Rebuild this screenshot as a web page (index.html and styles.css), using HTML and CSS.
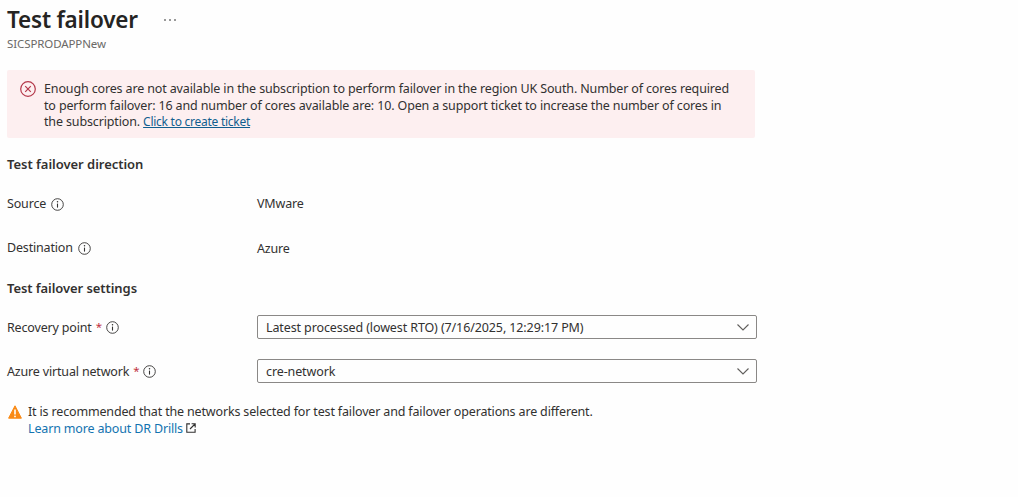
FILE: index.html
```html
<!DOCTYPE html>
<html lang="en">
<head>
  <meta charset="UTF-8">
  <title>Test failover</title>
  <link rel="stylesheet" href="styles.css">
</head>
<body>

<svg class="sprite" width="0" height="0">
  <symbol id="icon-info" viewBox="0 0 13 13">
    <circle cx="6.5" cy="6.5" r="5.8" fill="none" stroke="currentColor" stroke-width=".9"/>
    <path d="M6.5 5.6v4" stroke="currentColor" stroke-width="1.1"/>
    <circle cx="6.5" cy="3.7" r=".75" fill="currentColor"/>
  </symbol>
  <symbol id="icon-chevron" viewBox="0 0 12 7">
    <path d="M.5.5 6 6 11.5.5" fill="none" stroke="currentColor" stroke-width="1.1"/>
  </symbol>
</svg>

<div id="header">
  <h1>Test failover</h1>
  <div class="more"><i></i><i></i><i></i></div>
</div>
<div id="subtitle">SICSPRODAPPNew</div>

<div id="error-box">
  <svg class="error-icon" viewBox="0 0 16 16">
    <circle cx="8" cy="8" r="7.3" fill="none" stroke="currentColor" stroke-width="1.2"/>
    <path d="M5.2 5.2l5.6 5.6M10.8 5.2l-5.6 5.6" stroke="currentColor" stroke-width="1.2"/>
  </svg>
  <div class="error-text">
    Enough cores are not available in the subscription to perform failover in the region UK South. Number of cores required<br>
    to perform failover: 16 and number of cores available are: 10. Open a support ticket to increase the number of cores in<br>
    the subscription. <a href="#">Click to create ticket</a>
  </div>
</div>

<h2>Test failover direction</h2>
<div class="row">
  <div class="label"><span>Source</span><svg class="info"><use href="#icon-info"/></svg></div>
  <div class="value">VMware</div>
</div>
<div class="row">
  <div class="label"><span>Destination</span><svg class="info"><use href="#icon-info"/></svg></div>
  <div class="value lower">Azure</div>
</div>

<h2 class="settings">Test failover settings</h2>
<div class="row">
  <div class="label"><span>Recovery point</span><b class="req">*</b><svg class="info"><use href="#icon-info"/></svg></div>
  <div class="select" tabindex="0"><span>Latest processed (lowest RTO) (7/16/2025, 12:29:17 PM)</span><svg class="chevron"><use href="#icon-chevron"/></svg></div>
</div>
<div class="row">
  <div class="label"><span>Azure virtual network</span><b class="req">*</b><svg class="info"><use href="#icon-info"/></svg></div>
  <div class="select" tabindex="0"><span>cre-network</span><svg class="chevron"><use href="#icon-chevron"/></svg></div>
</div>

<div id="warning">
  <svg class="warning-icon" viewBox="0 0 14 14">
    <path d="M7 .8 13.4 13.2H.6z" fill="#f98a16" stroke="#f98a16" stroke-linejoin="round"/>
    <path d="M7 4.4v5" stroke="#fff" stroke-width="1.6"/>
    <circle cx="7" cy="11.4" r=".9" fill="#fff"/>
  </svg>
  <div>
    It is recommended that the networks selected for test failover and failover operations are different.<br>
    <a href="#">Learn more about DR Drills</a><svg class="external" viewBox="0 0 10 10">
      <path d="M4 .9H.8v8.3h8.3V6M5.6.8h3.6v3.6M9 1 4 6" fill="none" stroke="currentColor" stroke-width="1.1"/>
    </svg>
  </div>
</div>

</body>
</html>
```

FILE: styles.css
```css
body {
  margin: 0;
  padding: 6px 0 0 7px;
  background: #fefefe;
  color: #323130;
  font-family: "Segoe UI", "Noto Sans", sans-serif;
  font-size: 12.5px;
  line-height: 16.6px;
  letter-spacing: -0.17px;
  white-space: nowrap;
}
.sprite {
  position: absolute;
}
a {
  color: #1373b0;
  text-decoration: none;
}
#header {
  display: flex;
  align-items: center;
  height: 28px;
}
h1 {
  margin: 0;
  width: 157px;
  font-size: 22.5px;
  font-weight: 600;
  letter-spacing: -0.2px;
  color: #252423;
}
.more {
  display: flex;
  gap: 3px;
}
.more i {
  width: 2px;
  height: 2px;
  border-radius: 1px;
  background: #777;
}
#subtitle {
  height: 20px;
  line-height: 19px;
  font-size: 11.5px;
  letter-spacing: -0.1px;
  color: #6b6967;
}
#error-box {
  display: flex;
  box-sizing: border-box;
  width: 748px;
  height: 68px;
  margin-top: 16px;
  padding: 11px 13px;
  border-radius: 2px;
  background: #fdeff0;
}
.error-icon {
  width: 16px;
  height: 16px;
  margin-right: 8px;
  color: #b4384a;
}
.error-text {
  letter-spacing: -0.14px;
}
.error-text a {
  font-size: 12px;
  letter-spacing: -0.26px;
  color: #115e8f;
  text-decoration: underline;
}
h2 {
  margin: 16px 0 0;
  height: 20px;
  line-height: 20px;
  font-size: 13px;
  font-weight: 600;
  letter-spacing: -0.03px;
}
.row {
  display: flex;
  align-items: center;
  height: 24px;
  margin: 18px 0 20px;
}
h2.settings {
  margin-top: -2px;
  letter-spacing: -0.07px;
}
.settings + .row {
  margin-top: 17px;
}
.row + .row {
  margin-top: 0;
}
.label {
  display: flex;
  align-items: center;
  width: 250px;
}
.settings ~ .row span {
  padding-top: 2px;
}
.info {
  width: 13px;
  height: 13px;
  margin: 1px 0 0 5px;
}
.req {
  margin-left: 4px;
  font-size: 11.5px;
  font-weight: 400;
  color: #c03040;
}
.req + .info {
  margin-left: 4px;
}
.value.lower {
  padding-top: 2px;
}
.select {
  display: flex;
  align-items: center;
  justify-content: space-between;
  box-sizing: border-box;
  width: 500px;
  height: 24px;
  padding: 0 7px 0 8px;
  border: 1px solid #8a8886;
  border-radius: 2px;
  letter-spacing: -0.11px;
}
.chevron {
  width: 12px;
  height: 7px;
  color: #605e5c;
}
#warning {
  display: flex;
  margin-top: 21px;
  letter-spacing: -0.16px;
}
.warning-icon {
  width: 14px;
  height: 14px;
  margin: 1px 6px 0 1px;
}
.external {
  width: 10px;
  height: 10px;
  margin-left: 3px;
}
```
